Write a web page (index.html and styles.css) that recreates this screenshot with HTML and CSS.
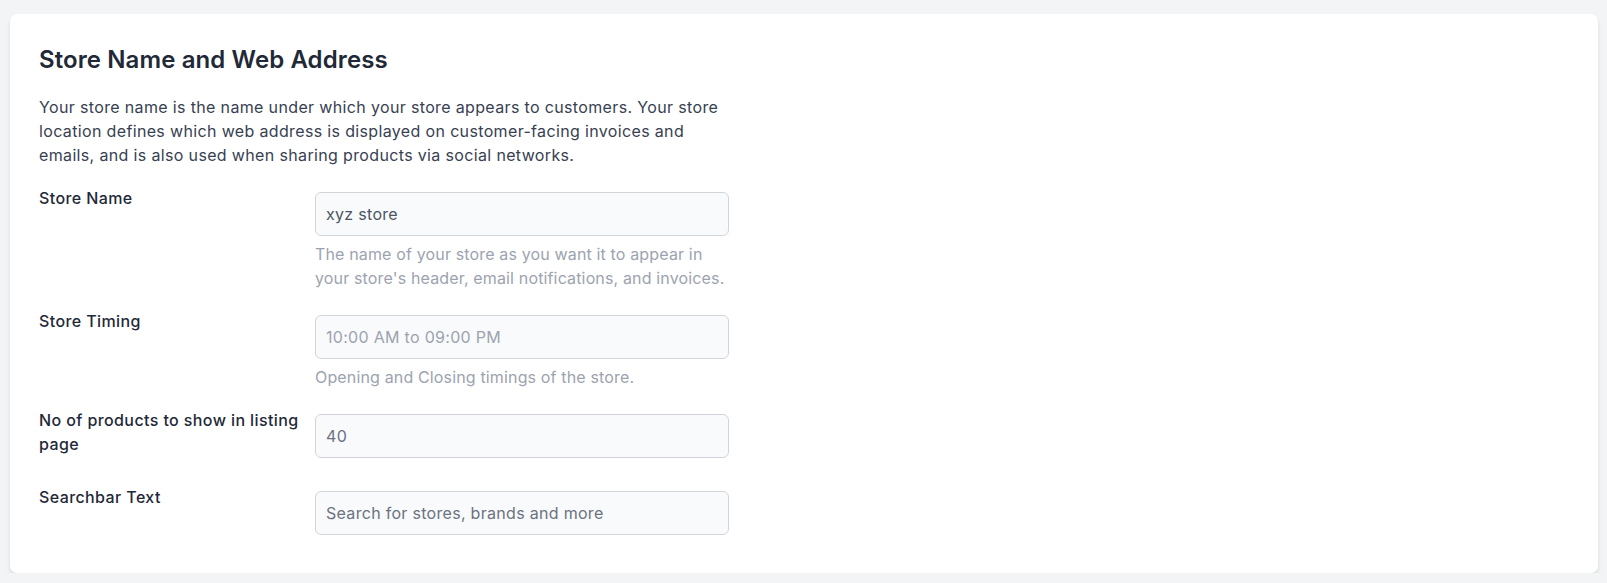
FILE: index.html
```html
<!DOCTYPE html>
<html lang="en">
<head>
<meta charset="utf-8">
<title>Store Name and Web Address</title>
<link rel="stylesheet" href="styles.css">
</head>
<body>
<main class="page">
  <section class="card">
    <div class="content">
      <h2 class="title">Store Name and Web Address</h2>
      <p class="intro">Your store name is the name under which your store appears to customers. Your store location defines which web address is displayed on customer-facing invoices and emails, and is also used when sharing products via social networks.</p>
      <div class="fields">
        <div class="field">
          <label class="label" for="store-name">Store Name</label>
          <div class="control">
            <input class="input input--value" id="store-name" type="text" value="xyz store">
            <p class="help">The name of your store as you want it to appear in your store's header, email notifications, and invoices.</p>
          </div>
        </div>
        <div class="field">
          <label class="label" for="store-timing">Store Timing</label>
          <div class="control">
            <input class="input input--light" id="store-timing" type="text" placeholder="10:00 AM to 09:00 PM">
            <p class="help">Opening and Closing timings of the store.</p>
          </div>
        </div>
        <div class="field field--nohelp">
          <label class="label" for="products">No of products to show in listing page</label>
          <div class="control">
            <input class="input input--mid" id="products" type="text" placeholder="40">
          </div>
        </div>
        <div class="field field--nohelp">
          <label class="label" for="searchbar">Searchbar Text</label>
          <div class="control">
            <input class="input input--mid" id="searchbar" type="text" placeholder="Search for stores, brands and more">
          </div>
        </div>
      </div>
    </div>
  </section>
</main>
</body>
</html>
```

FILE: styles.css
```css
* { box-sizing: border-box; }

html, body {
  margin: 0;
  padding: 0;
  background: #f3f4f6;
  font-family: Inter, "Noto Sans", "Liberation Sans", sans-serif;
}

.page {
  padding: 14px 9px 0 10px;
}

.card {
  background: #ffffff;
  border-radius: 7px;
  box-shadow: 0 4px 6px -1px rgba(0, 0, 0, 0.10), 0 2px 4px -1px rgba(0, 0, 0, 0.06);
  padding: 32px 29px 30px 29px;
}

.content {
  max-width: 690px;
}

.title {
  margin: 0;
  font-size: 24px;
  line-height: 28px;
  font-weight: 600;
  letter-spacing: 0.1px;
  color: #1f2937;
}

.intro {
  margin: 21px 0 0 0;
  font-size: 16px;
  line-height: 24px;
  letter-spacing: 0.35px;
  color: #374151;
}

.fields {
  margin-top: 19px;
  display: flex;
  flex-direction: column;
  gap: 19px;
}

.field {
  display: grid;
  grid-template-columns: 2fr 3fr;
  align-items: start;
}

.field--nohelp {
  padding-bottom: 8px;
}

.label {
  font-size: 16px;
  line-height: 24px;
  font-weight: 500;
  letter-spacing: 0.4px;
  color: #1f2937;
  padding-right: 10px;
}

.control {
  padding-top: 6px;
}

.input {
  display: block;
  width: 100%;
  height: 44px;
  margin: 0;
  padding: 0 10px;
  border: 1px solid #d1d5db;
  border-radius: 6px;
  background: #f9fafb;
  font-family: inherit;
  font-size: 16px;
  letter-spacing: 0.3px;
  color: #4b5563;
  outline: none;
}

.input--light::placeholder { color: #9ca3af; opacity: 1; }
.input--mid::placeholder { color: #6b7280; opacity: 1; }

.help {
  margin: 6px 0 0 0;
  font-size: 16px;
  line-height: 24px;
  letter-spacing: 0.15px;
  color: #9ca3af;
}
```
